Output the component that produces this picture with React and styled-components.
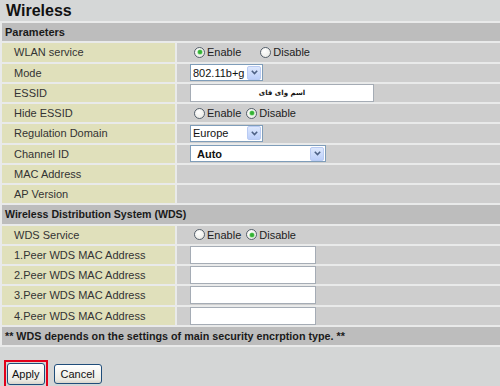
import React from "react";
import styled, { createGlobalStyle } from "styled-components";

const GlobalStyle = createGlobalStyle`
  html, body {
    margin: 0;
    padding: 0;
    background: #d4d6d6;
  }
  body {
    font-family: "Liberation Sans", Arial, sans-serif;
    color: #2a2a2a;
  }
`;

const Page = styled.div`
  width: 500px;
  height: 386px;
  overflow: hidden;
  display: flex;
  flex-direction: column;
  background: #d4d6d6;
`;

const TitleBar = styled.h1`
  margin: 0;
  height: 21px;
  line-height: 22px;
  padding-left: 6px;
  font-size: 16px;
  font-weight: bold;
  color: #111;
  background: #d5d7d7;
`;

const Table = styled.div`
  display: grid;
  grid-template-columns: 173px 1fr;
  grid-auto-rows: 18.25px;
  gap: 2px;
  padding: 2px 0 2px 2px;
  background: #e9eaea;
`;

const SectionHeader = styled.div`
  grid-column: 1 / -1;
  display: flex;
  align-items: center;
  padding-left: 3px;
  background: #bdbdbd;
  font-size: ${({ $size }) => $size || 10.6}px;
  font-weight: bold;
  color: #1a1a1a;
`;

const Label = styled.div`
  display: flex;
  align-items: center;
  padding-left: 12px;
  background: #e0e0bb;
  font-size: 11px;
  color: #333;
`;

const Value = styled.div`
  display: flex;
  align-items: center;
  padding-left: 13px;
  background: #cecece;
  font-size: 11px;
  color: #222;
`;

const RadioGroup = styled.label`
  display: flex;
  align-items: center;
  gap: 2px;
  margin-left: ${({ $lead }) => $lead || 0}px;
`;

const RadioCircle = styled.span`
  position: relative;
  width: 11px;
  height: 11px;
  border-radius: 50%;
  border: 1px solid #55606c;
  background: radial-gradient(circle at 40% 35%, #ffffff 0%, #e6e6e0 100%);
  box-sizing: border-box;

  &::after {
    content: "";
    display: ${({ $checked }) => ($checked ? "block" : "none")};
    position: absolute;
    left: 2.5px;
    top: 2.5px;
    width: 4px;
    height: 4px;
    border-radius: 50%;
    background: #34b034;
    box-shadow: 0 0 0 0.6px #7fdc7f;
  }
`;

const Radio = ({ checked, children, lead }) => (
  <RadioGroup $lead={lead}>
    <RadioCircle $checked={checked} />
    {children}
  </RadioGroup>
);

const TextBox = styled.div`
  box-sizing: border-box;
  width: ${({ $width }) => $width}px;
  height: 18px;
  border: 1px solid #a5acb5;
  background: #fff;
  display: flex;
  align-items: center;
  justify-content: center;
  font-family: "DejaVu Sans", sans-serif;
  font-size: 7px;
  font-weight: bold;
  color: #111;
`;

const SelectBox = styled.div`
  box-sizing: border-box;
  width: ${({ $width }) => $width}px;
  height: 17px;
  border: 1px solid #7f9db9;
  background: #fff;
  display: flex;
  align-items: center;
  justify-content: space-between;
  padding: 0 1px 0 ${({ $pad }) => $pad || 2}px;
  font-size: 11px;
  font-weight: ${({ $bold }) => ($bold ? "bold" : "normal")};
  color: #111;
`;

const ArrowBox = styled.span`
  width: 14px;
  height: 14px;
  border: 1px solid #b9cbf3;
  border-radius: 2px;
  box-sizing: border-box;
  background: linear-gradient(#dde8fd, #bccffa);
  display: flex;
  align-items: center;
  justify-content: center;
`;

const Select = ({ width, bold, pad, children }) => (
  <SelectBox $width={width} $bold={bold} $pad={pad}>
    <span>{children}</span>
    <ArrowBox>
      <svg width="7" height="5" viewBox="0 0 7 5">
        <path d="M0.8 0.8 L3.5 3.5 L6.2 0.8" fill="none" stroke="#4d6185" strokeWidth="1.6" />
      </svg>
    </ArrowBox>
  </SelectBox>
);

const Footer = styled.div`
  flex: 1;
  display: flex;
  align-items: flex-start;
  gap: 6px;
  padding: 13px 0 0 4px;
  background: #d4d6d6;
`;

const Highlight = styled.div`
  flex: none;
  border: 2px solid #e2001a;
  padding: 1px;
  display: flex;
`;

const Button = styled.button`
  box-sizing: border-box;
  height: ${({ $height }) => $height || 22}px;
  padding: 0 ${({ $pad }) => $pad || 4}px;
  border: 1px solid #1f4d7a;
  border-radius: 3px;
  background: linear-gradient(#ffffff, #ecebe4 80%, #d8d6cc);
  font-family: "Liberation Sans", Arial, sans-serif;
  font-size: 11px;
  color: #111;
  margin-top: ${({ $top }) => $top || 0}px;
`;

const enableDisable = (enabled, gap) => (
  <>
    <Radio checked={enabled} lead={4}>Enable</Radio>
    <Radio checked={!enabled} lead={gap}>Disable</Radio>
  </>
);

const rows = [
  { label: "WLAN service", value: enableDisable(true, 19) },
  { label: "Mode", value: <Select width={73}>802.11b+g</Select> },
  { label: "ESSID", value: <TextBox $width={184}>اسم واى فاى</TextBox> },
  { label: "Hide ESSID", value: enableDisable(false, 5) },
  { label: "Regulation Domain", value: <Select width={73}>Europe</Select> },
  { label: "Channel ID", value: <Select width={136} bold pad={6}>Auto</Select> },
  { label: "MAC Address", value: null },
  { label: "AP Version", value: null },
];

const wdsRows = [
  { label: "WDS Service", value: enableDisable(false, 5) },
  { label: "1.Peer WDS MAC Address", value: <TextBox $width={126} /> },
  { label: "2.Peer WDS MAC Address", value: <TextBox $width={126} /> },
  { label: "3.Peer WDS MAC Address", value: <TextBox $width={126} /> },
  { label: "4.Peer WDS MAC Address", value: <TextBox $width={126} /> },
];

const renderRows = (list) =>
  list.map((row) => (
    <React.Fragment key={row.label}>
      <Label>{row.label}</Label>
      <Value>{row.value}</Value>
    </React.Fragment>
  ));

const App = () => {
  return (
    <Page>
      <GlobalStyle />
      <TitleBar>Wireless</TitleBar>
      <Table>
        <SectionHeader $size={11}>Parameters</SectionHeader>
        {renderRows(rows)}
        <SectionHeader>Wireless Distribution System (WDS)</SectionHeader>
        {renderRows(wdsRows)}
        <SectionHeader $size={10.75}>
          ** WDS depends on the settings of main security encrption type. **
        </SectionHeader>
      </Table>
      <Footer>
        <Highlight>
          <Button>Apply</Button>
        </Highlight>
        <Button $pad={6} $height={20} $top={4}>Cancel</Button>
      </Footer>
    </Page>
  );
};

export default App;
